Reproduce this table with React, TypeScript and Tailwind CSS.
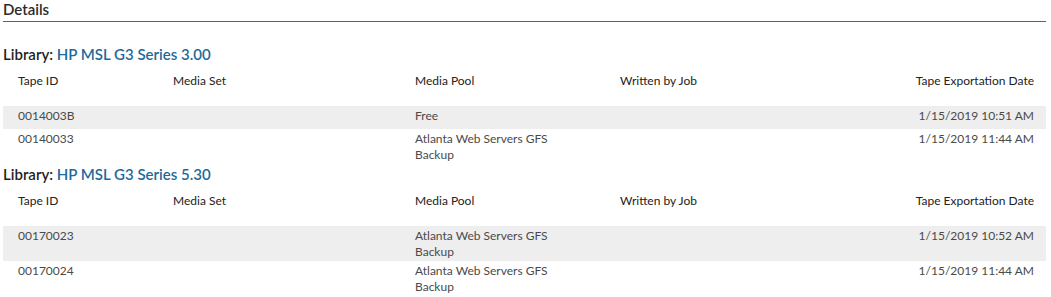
const libraries = [
  {
    name: "HP MSL G3 Series 3.00",
    tapes: [
      { id: "0014003B", set: "", pool: "Free", job: "", date: "1/15/2019 10:51 AM" },
      { id: "00140033", set: "", pool: "Atlanta Web Servers GFS Backup", job: "", date: "1/15/2019 11:44 AM" },
    ],
  },
  {
    name: "HP MSL G3 Series 5.30",
    tapes: [
      { id: "00170023", set: "", pool: "Atlanta Web Servers GFS Backup", job: "", date: "1/15/2019 10:52 AM" },
      { id: "00170024", set: "", pool: "Atlanta Web Servers GFS Backup", job: "", date: "1/15/2019 11:44 AM" },
    ],
  },
];

const cols = "grid grid-cols-[155px_242px_205px_1fr_auto] pl-[15px] pr-[12px]";

export default function App() {
  return (
    <div className="bg-white pl-[3px] pr-[5px] font-['Lato','Liberation_Sans',sans-serif] text-[12px] text-[#333]">
      <h1 className="border-b border-[#3a6f90] pb-[3px] text-[15px] font-semibold leading-[18px] text-[#2b2b2b]">
        Details
      </h1>
      <div className="pt-[22px]">
        {libraries.map((lib) => (
          <section key={lib.name}>
            <h2 className="text-[15px] font-semibold leading-[20px] text-[#1f1f1f]">
              Library: <span className="text-[#1e6a9a]">{lib.name}</span>
            </h2>
            <div className={`${cols} pt-[9px] pb-[17px] leading-[16px] text-[#222]`}>
              <div>Tape ID</div>
              <div>Media Set</div>
              <div>Media Pool</div>
              <div>Written by Job</div>
              <div className="text-right">Tape Exportation Date</div>
            </div>
            {lib.tapes.map((t, i) => (
              <div
                key={t.id}
                className={`${cols} min-h-[23px] pt-[2px] pb-[1px] leading-[16px] text-[#4a4a4a] ${i % 2 === 0 ? "bg-[#eeeeee]" : ""}`}
              >
                <div>{t.id}</div>
                <div>{t.set}</div>
                <div className="max-w-[150px]">{t.pool}</div>
                <div>{t.job}</div>
                <div className="text-right">{t.date}</div>
              </div>
            ))}
          </section>
        ))}
      </div>
    </div>
  );
}
